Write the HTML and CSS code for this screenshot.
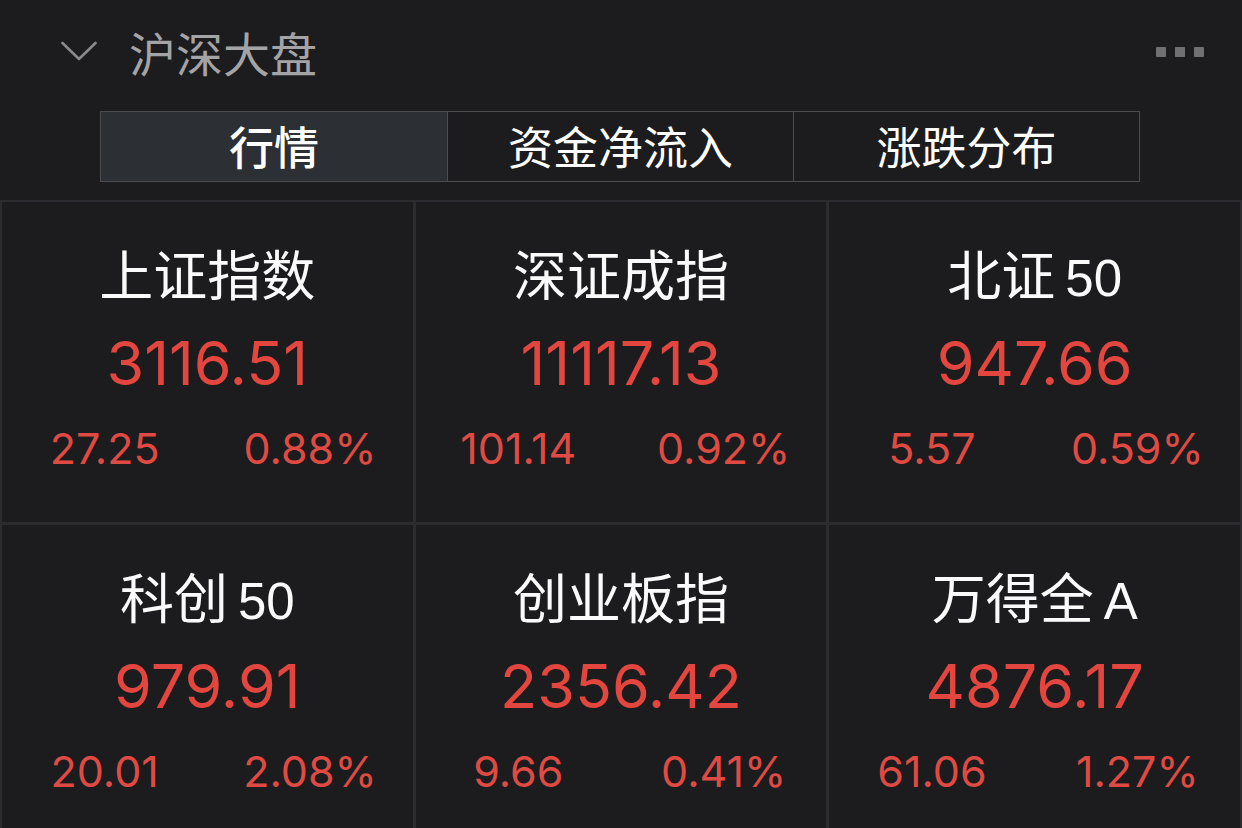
FILE: index.html
```html
<!DOCTYPE html>
<html lang="zh-CN">
<head>
<meta charset="utf-8">
<title>沪深大盘</title>
<link rel="stylesheet" href="styles.css">
</head>
<body>
<div class="page">
  <header class="header">
    <svg class="chevron" width="36" height="20" viewBox="0 0 36 20">
      <polyline points="1.5,2 18,18 34.5,2" fill="none" stroke="#8a8a8c" stroke-width="2.6" stroke-linecap="round" stroke-linejoin="round"/>
    </svg>
    <h1 class="title">沪深大盘</h1>
    <div class="more"><span></span><span></span><span></span></div>
  </header>
  <nav class="tabs">
    <div class="tab active">行情</div>
    <div class="tab">资金净流入</div>
    <div class="tab">涨跌分布</div>
  </nav>
  <section class="grid">
    <div class="cell">
      <div class="name">上证指数</div>
      <div class="value">3116.51</div>
      <div class="sub"><span>27.25</span><span>0.88%</span></div>
    </div>
    <div class="cell">
      <div class="name">深证成指</div>
      <div class="value">11117.13</div>
      <div class="sub"><span>101.14</span><span>0.92%</span></div>
    </div>
    <div class="cell">
      <div class="name">北证<span class="lat">50</span></div>
      <div class="value">947.66</div>
      <div class="sub"><span>5.57</span><span>0.59%</span></div>
    </div>
    <div class="cell">
      <div class="name">科创<span class="lat">50</span></div>
      <div class="value">979.91</div>
      <div class="sub"><span>20.01</span><span>2.08%</span></div>
    </div>
    <div class="cell">
      <div class="name">创业板指</div>
      <div class="value">2356.42</div>
      <div class="sub"><span>9.66</span><span>0.41%</span></div>
    </div>
    <div class="cell">
      <div class="name">万得全<span class="lat">A</span></div>
      <div class="value">4876.17</div>
      <div class="sub"><span>61.06</span><span>1.27%</span></div>
    </div>
  </section>
</div>
</body>
</html>
```

FILE: styles.css
```css
* { box-sizing: border-box; margin: 0; padding: 0; }
html, body {
  width: 1242px;
  height: 828px;
  overflow: hidden;
  background: #1c1c1e;
}
body {
  font-family: "Noto Sans CJK SC", "Liberation Sans", sans-serif;
  color: #fff;
}
.page { width: 1242px; }

.header {
  height: 102px;
  display: flex;
  align-items: center;
  padding-left: 61px;
  padding-right: 38px;
}
.chevron { flex: none; }
.title {
  margin-left: 32px;
  font-size: 47px;
  font-weight: 400;
  color: #a4a4a6;
  line-height: 1;
}
.more {
  margin-left: auto;
  display: flex;
  gap: 9px;
  margin-top: 2px;
}
.more span {
  width: 10px;
  height: 10px;
  background: #707072;
  border-radius: 1px;
}

.tabs {
  margin: 9px 0 0 100px;
  width: 1040px;
  height: 71px;
  display: grid;
  grid-template-columns: repeat(3, 1fr);
  border: 1px solid #4c4c4f;
}
.tab {
  display: flex;
  align-items: center;
  justify-content: center;
  font-size: 45px;
  color: #fff;
  line-height: 1;
  padding-bottom: 2px;
  border-left: 1px solid #4c4c4f;
}
.tab:first-child { border-left: none; }
.tab.active {
  background: #2c2f33;
  font-weight: 500;
}

.grid {
  margin-top: 18px;
  display: grid;
  grid-template-columns: repeat(3, 1fr);
  grid-auto-rows: 320px;
  gap: 3px;
  padding: 2px 2px 0 2px;
  background: #2c2c30;
}
.cell {
  background: #1c1c1e;
  display: flex;
  flex-direction: column;
  align-items: center;
  padding-top: 41px;
}
.name {
  height: 60px;
  line-height: 60px;
  font-size: 54px;
  color: #fafafa;
  white-space: nowrap;
}
.name .lat {
  font-family: "Liberation Sans", sans-serif;
  margin-left: 10px;
  font-size: 51px;
}
.value {
  margin-top: 25px;
  height: 70px;
  line-height: 70px;
  font-family: Inter, "Liberation Sans", sans-serif;
  font-size: 61px;
  color: #e3463e;
}
.sub {
  margin-top: 25px;
  width: 100%;
  display: grid;
  grid-template-columns: 1fr 1fr;
  height: 50px;
  line-height: 50px;
  font-family: Inter, "Liberation Sans", sans-serif;
  font-size: 43px;
  color: #df4a43;
}
.sub span { text-align: center; }
```
